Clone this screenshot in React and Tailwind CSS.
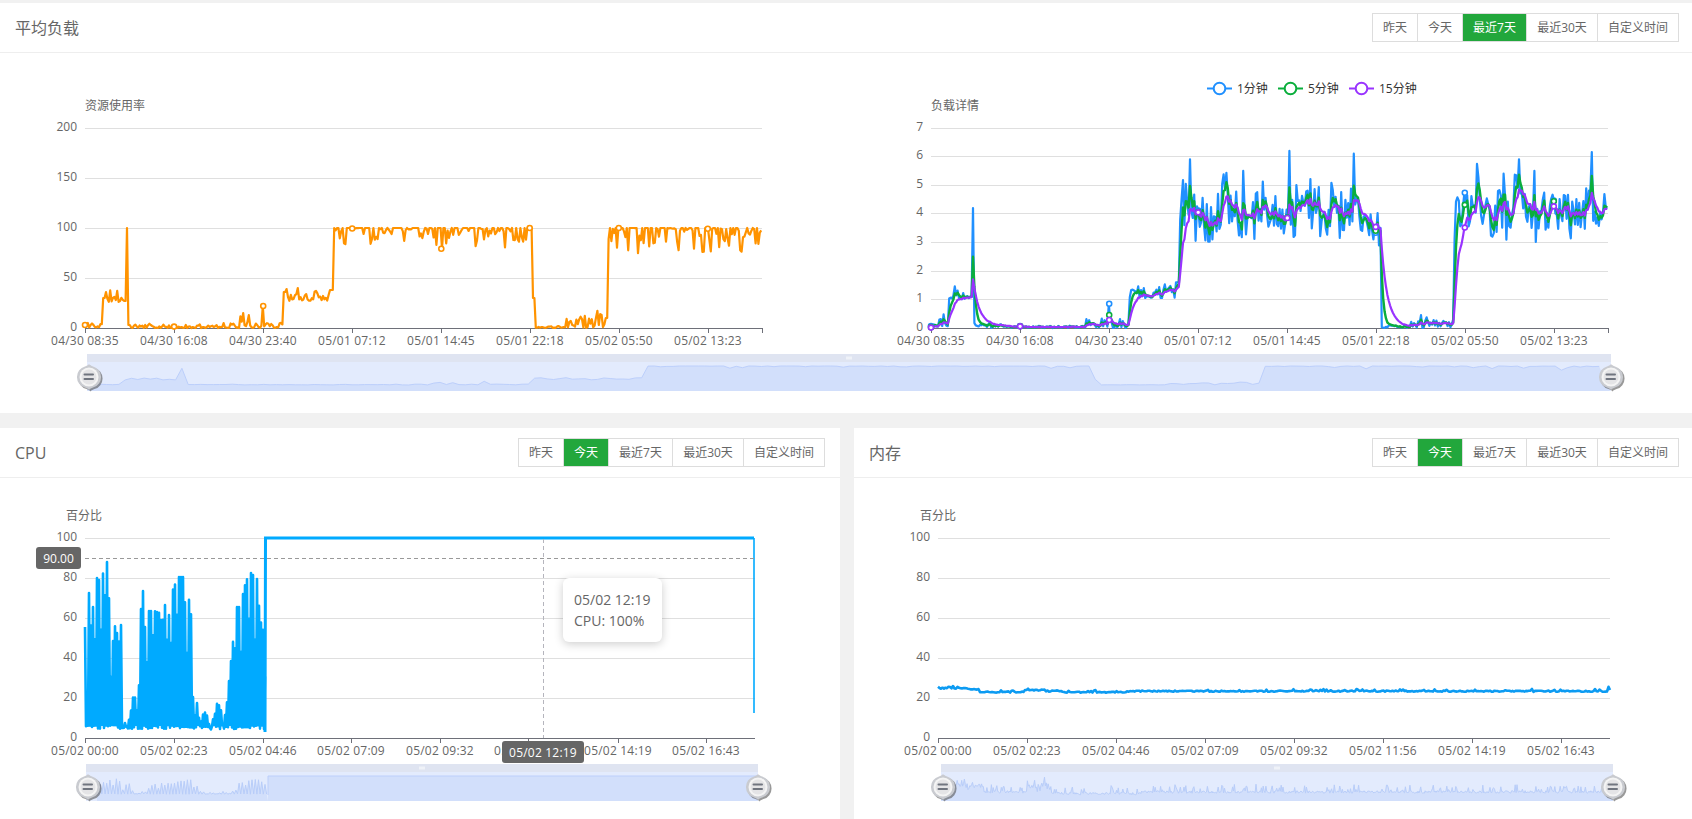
const FONT = "font-['Open_Sans','Noto_Sans_CJK_SC',sans-serif]";

const makeRand = (seed) => () => {
  seed = (seed + 0x6d2b79f5) | 0;
  let t = Math.imul(seed ^ (seed >>> 15), 1 | seed);
  t = (t + Math.imul(t ^ (t >>> 7), 61 | t)) ^ t;
  return ((t ^ (t >>> 14)) >>> 0) / 4294967296;
};

// plot widths are 677px on the load charts, one point every 1.4px
const LOAD_W = 677;
const LOAD_STEP = 1.4;

function usageAt(px, r) {
  if (px < 18) return r() * r() * 11;
  if (px < 20) return 30;
  if (px < 38) return 26 + r() * r() * 16;
  if (px < 41) return 27;
  if (px < 43) return 100;
  if (px < 46) return 3;
  if (px < 155) return r() * r() * 8 * (px > 70 && px < 120 ? 0.5 : 1);
  if (px < 198) return r() * r() * 14;
  if (px < 201) return 36;
  if (px < 244) return 27 + r() * r() * 17;
  if (px < 248) return 38;
  if (px < 442) {
    if (r() < 0.36) return 100;
    return 100 - r() * r() * (px > 432 ? 36 : 27);
  }
  if (px < 447) return 100;
  if (px < 450) return 30;
  if (px < 480) return r() * 2;
  if (px < 520) return r() * r() * 20;
  if (px < 523) return 10;
  if (r() < 0.36) return 100;
  return 100 - r() * r() * 30;
}

function loadAt(px, r) {
  const wave = 0.32 * Math.sin(px / 6.5) + 0.18 * Math.sin(px / 2.9 + 1);
  if (px > 70 && px < 155) return r() * 0.08;
  if (px < 18) return 0.05 + r() * r() * 0.55;
  if (px >= 18 && px < 38) return 1 + r() * r() * 0.7;
  if (px >= 38 && px < 41) return 1.1;
  if (px >= 41 && px < 43) return 4.2;
  if (px >= 43 && px < 198) return r() * r() * 0.42;
  if (px >= 198 && px < 244) return 1.05 + r() * r() * 0.75;
  if (px >= 244 && px < 248) return 1.6;
  if (px >= 248 && px < 450) return 3.1 + wave + r() * 1.85 + (r() < 0.08 ? r() * 1.1 : 0);
  if (px >= 450 && px < 480) return r() * 0.1;
  if (px >= 480 && px < 522) return r() * r() * 0.7;
  if (px >= 523) return 3.1 + wave + r() * 1.85 + (r() < 0.07 ? r() * 1 : 0);
  return 0.3;
}

function buildLoad() {
  const r1 = makeRand(11);
  const r2 = makeRand(29);
  const usage = [];
  const blue = [];
  for (let px = 0; px <= LOAD_W; px += LOAD_STEP) {
    usage.push([px, usageAt(px, r1)]);
    blue.push([px, loadAt(px, r2)]);
  }
  const spike = (arr, px, v) => {
    arr[Math.round(px / LOAD_STEP)][1] = v;
  };
  spike(usage, 178, 22);
  spike(usage, 158, 15);
  spike(usage, 42, 100);
  spike(blue, 178, 0.85);
  spike(blue, 259, 5.9);
  spike(blue, 358, 6.2);
  spike(blue, 423, 6.1);
  spike(blue, 312, 5.5);
  spike(blue, 572, 5.4);
  spike(blue, 588, 5.9);
  spike(blue, 604, 5.5);
  const ema = (a) => {
    let cur = 0;
    return blue.map(([x, v]) => {
      cur += (v - cur) * a;
      return [x, cur];
    });
  };
  return { usage, blue, green: ema(0.45), purple: ema(0.2) };
}

const { usage, blue, green, purple } = buildLoad();

const toPoints = (arr, x0, y0, scale) =>
  arr.map(([x, v]) => `${(x0 + x).toFixed(1)},${(y0 - v * scale).toFixed(1)}`).join(" ");

const CPU_ENV = [
  [0, 55], [2, 20], [4, 72], [8, 65], [11, 80], [15, 78], [19, 83], [23, 89], [26, 30], [29, 57],
  [32, 52], [35, 80], [38, 8], [42, 6], [45, 10], [49, 23], [53, 10], [57, 82], [60, 55], [64, 63],
  [69, 63], [75, 62], [77, 55], [80, 66], [83, 60], [85, 70], [89, 75], [93, 80], [99, 80], [102, 42],
  [105, 82], [108, 20], [112, 17], [115, 6], [119, 13], [123, 10], [126, 6], [131, 13], [134, 24], [137, 8],
  [141, 12], [144, 28], [146, 38], [150, 65], [155, 65], [161, 78], [166, 82], [172, 79], [175, 59], [180, 50],
];

function envAt(px) {
  for (let i = 1; i < CPU_ENV.length; i++) {
    if (px <= CPU_ENV[i][0]) {
      const [x0, v0] = CPU_ENV[i - 1];
      const [x1, v1] = CPU_ENV[i];
      return v0 + ((v1 - v0) * (px - x0)) / (x1 - x0);
    }
  }
  return 50;
}

function cpuZigzag(x0, y0, scale, step, xScale = 1) {
  const r = makeRand(5);
  const pts = [];
  let up = true;
  for (let px = 0; px <= 180; px += step) {
    const top = envAt(px) * (r() < 0.7 ? 1 : 0.55 + r() * 0.4);
    const v = up ? top : 4 + r() * 2.2;
    pts.push(`${(x0 + px * xScale).toFixed(1)},${(y0 - v * scale).toFixed(1)}`);
    up = !up;
  }
  return pts.join(" ");
}

function memorySeries() {
  const r = makeRand(77);
  const pts = [];
  for (let px = 0; px <= 672; px += 1.5) {
    let v = 23.4;
    if (px < 42) v = 24.9 - (px > 25 ? (px - 25) * 0.04 : 0);
    else if (px < 86) v = 23;
    else if (px < 107) v = 24;
    else if (px < 124) v = 23.5;
    else if (px < 188) v = 22.9;
    v += (r() - 0.5) * 0.6 + (r() < 0.08 ? 0.8 : 0);
    pts.push([px, v]);
  }
  pts[pts.length - 1][1] = 24;
  pts[pts.length - 2][1] = 25.6;
  return pts;
}

function memoryMini() {
  const r = makeRand(41);
  const pts = [];
  for (let px = 0; px <= 672; px += 0.9) {
    let y = 792;
    if (px < 14) y = 786;
    else if (px < 42) y = 784 + r() * 5;
    else if (px < 86) y = 792;
    else if (px < 110) y = 784 + r() * 7;
    else if (px < 200) y = 793.5;
    y += (r() - 0.5) * 2.5;
    if (px > 14 && r() < 0.22) y -= 2 + r() * 5;
    pts.push(`${(941 + px).toFixed(1)},${y.toFixed(1)}`);
  }
  return pts.join(" ");
}

function miniUsage() {
  const pts = [];
  for (let i = 0; i + 2 < usage.length; i += 2) {
    const a = usage[i][1];
    const b = usage[i + 1][1];
    const v = Math.max(a, b) * 0.75 + ((a + b) / 2) * 0.25;
    pts.push(`${(87.4 + (usage[i][0] / LOAD_W) * 1523).toFixed(1)},${(385 - v * 0.19).toFixed(1)}`);
  }
  return pts.join(" ");
}

function Grid({ x0, x1, ys, labels, ticks, tickLabels, axisY, lastTick }) {
  return (
    <g fontSize="12" fill="#666">
      {ys.map((y, i) => (
        <g key={y}>
          {i < ys.length - 1 && <line x1={x0} x2={x1} y1={y + 0.5} y2={y + 0.5} stroke="#dfdfdf" />}
          <text x={x0 - 8} y={y + 3} textAnchor="end">{labels[i]}</text>
        </g>
      ))}
      <line x1={x0} x2={x1} y1={axisY + 0.5} y2={axisY + 0.5} stroke="#6e7079" />
      {ticks.map((t, i) => (
        <g key={t}>
          <line x1={t + 0.5} x2={t + 0.5} y1={axisY} y2={axisY + 5} stroke="#6e7079" />
          {tickLabels[i] && <text x={t} y={axisY + 17} textAnchor="middle" letterSpacing="0.2">{tickLabels[i]}</text>}
        </g>
      ))}
      {lastTick && <line x1={lastTick + 0.5} x2={lastTick + 0.5} y1={axisY} y2={axisY + 5} stroke="#6e7079" />}
    </g>
  );
}

function Handle({ x, y }) {
  const shape = "M0 -13 C1 -11.6 2.5 -11.2 4 -10.6 A11 11 0 0 1 4 10.6 C2.5 11.2 1 11.6 0 13 C-1 11.6 -2.5 11.2 -4 10.6 A11 11 0 0 1 -4 -10.6 C-2.5 -11.2 -1 -11.6 0 -13 Z";
  return (
    <g transform={`translate(${x} ${y})`}>
      <path d={shape} transform="translate(1.5 1.5)" fill="#555" opacity="0.6" />
      <path d={shape} fill="#c9cbd0" />
      <circle r="9.5" fill="#f4f4f4" />
      <circle r="7.5" fill="#e4e4e6" />
      <rect x="-5.5" y="-3.5" width="10.5" height="2" rx="1" fill="#70757f" />
      <rect x="-5.5" y="1" width="10.5" height="2" rx="1" fill="#70757f" />
    </g>
  );
}

function ZoomBar({ x0, x1, top, children }) {
  const mid = (x0 + x1) / 2;
  return (
    <g>
      <rect x={x0} y={top} width={x1 - x0} height={8} fill="#dfe4f1" />
      <rect x={x0} y={top + 8} width={x1 - x0} height={29} fill="#e3ebfd" />
      {children}
      <g fill="#fff">
        <rect x={mid - 2.5} y={top + 2.5} width="1" height="3" />
        <rect x={mid - 0.5} y={top + 2.5} width="1" height="3" />
        <rect x={mid + 1.5} y={top + 2.5} width="1" height="3" />
      </g>
      <Handle x={x0 + 2} y={top + 23} />
      <Handle x={x1} y={top + 23} />
    </g>
  );
}

function Dots({ x0, y0, scale, series, stroke, r = 2.5 }) {
  const ticks = [0, 89.1, 178.2, 267.2, 356.3, 444.7, 533.8, 622.8];
  return ticks.map((t) => (
    <circle
      key={t}
      cx={x0 + t}
      cy={y0 - series[Math.round(t / LOAD_STEP)][1] * scale}
      r={r}
      fill="#fff"
      stroke={stroke}
      strokeWidth="1.6"
    />
  ));
}

function LegendItem({ x, color, label }) {
  return (
    <g>
      <line x1={x} x2={x + 25} y1={88.5} y2={88.5} stroke={color} strokeWidth="2" />
      <circle cx={x + 12.5} cy={88.5} r="5.8" fill="#fff" stroke={color} strokeWidth="2" />
      <text x={x + 30} y={93} fontSize="12" fill="#333">{label}</text>
    </g>
  );
}

function LoadCharts() {
  const tickOffsets = [0, 89.1, 178.2, 267.2, 356.3, 444.7, 533.8, 622.8];
  const tickLabels = ["04/30 08:35", "04/30 16:08", "04/30 23:40", "05/01 07:12", "05/01 14:45", "05/01 22:18", "05/02 05:50", "05/02 13:23"];
  const axisY = 328;
  const leftYs = [128, 178, 228, 278, 328];
  const rightYs = [128, 156, 185, 213, 242, 271, 299, 328];
  const miniLine = miniUsage();
  return (
    <svg width="1692" height="360" viewBox="0 53 1692 360" className="block">
      <text x="85" y="110" fontSize="12" fill="#666">资源使用率</text>
      <Grid
        x0={85}
        x1={762}
        ys={leftYs}
        labels={["200", "150", "100", "50", "0"]}
        ticks={tickOffsets.map((t) => Math.round(85 + t))}
        tickLabels={tickLabels}
        axisY={axisY}
        lastTick={762}
      />
      <polyline points={toPoints(usage, 85, axisY, 1)} fill="none" stroke="#ff9300" strokeWidth="2.2" strokeLinejoin="round" />
      <Dots x0={85} y0={axisY} scale={1} series={usage} stroke="#ff9300" />

      <LegendItem x={1207} color="#2090ff" label="1分钟" />
      <LegendItem x={1278} color="#0aae3c" label="5分钟" />
      <LegendItem x={1349} color="#9933ff" label="15分钟" />
      <text x="931" y="110" fontSize="12" fill="#666">负载详情</text>
      <Grid
        x0={931}
        x1={1608}
        ys={rightYs}
        labels={["7", "6", "5", "4", "3", "2", "1", "0"]}
        ticks={tickOffsets.map((t) => Math.round(931 + t))}
        tickLabels={tickLabels}
        axisY={axisY}
        lastTick={1608}
      />
      <polyline points={toPoints(blue, 931, axisY, 28.57)} fill="none" stroke="#2090ff" strokeWidth="2.2" strokeLinejoin="round" />
      <polyline points={toPoints(green, 931, axisY, 28.57)} fill="none" stroke="#0aae3c" strokeWidth="2.4" strokeLinejoin="round" />
      <polyline points={toPoints(purple, 931, axisY, 28.57)} fill="none" stroke="#9933ff" strokeWidth="2.2" strokeLinejoin="round" />
      <Dots x0={931} y0={axisY} scale={28.57} series={blue} stroke="#2090ff" />
      <Dots x0={931} y0={axisY} scale={28.57} series={green} stroke="#0aae3c" />
      <Dots x0={931} y0={axisY} scale={28.57} series={purple} stroke="#9933ff" />

      <ZoomBar x0={87} x1={1611} top={354}>
        <polygon points={`87.4,391 ${miniLine} 1610,391`} fill="#d2dffb" stroke="none" />
        <polyline points={miniLine} fill="none" stroke="#bccffb" strokeWidth="1" />
      </ZoomBar>
    </svg>
  );
}

const PERCENT_YS = [538, 578, 618, 658, 698, 738];
const PERCENT_LABELS = ["100", "80", "60", "40", "20", "0"];

function CpuChart() {
  const ticks = [85, 174, 263, 351, 440, 528, 618, 706];
  const labels = ["05/02 00:00", "05/02 02:23", "05/02 04:46", "05/02 07:09", "05/02 09:32", "05/02 11:56", "05/02 14:19", "05/02 16:43"];
  const axisY = 738;
  const miniSpikes = cpuZigzag(97, 795, 0.19, 1.7, 0.95);
  return (
    <svg width="840" height="341" viewBox="0 478 840 341" className="block">
      <text x="66" y="520" fontSize="12" fill="#666">百分比</text>
      <Grid x0={85} x1={755} ys={PERCENT_YS} labels={PERCENT_LABELS} ticks={ticks} tickLabels={labels} axisY={axisY} />
      <polyline points={cpuZigzag(85, axisY - 1, 2, 1)} fill="none" stroke="#00aaff" strokeWidth="2.6" strokeLinejoin="round" />
      <polyline points="265,732 265.5,538 754,538" fill="none" stroke="#00aaff" strokeWidth="3" />
      <line x1="754" x2="754" y1="538" y2="713" stroke="#00aaff" strokeWidth="1.6" />

      <line x1="85" x2="754" y1="558.5" y2="558.5" stroke="#999" strokeDasharray="4 3" />
      <rect x="36" y="547" width="45" height="22" rx="3" fill="#666" />
      <text x="58.5" y="562.5" fontSize="12" fill="#fff" textAnchor="middle">90.00</text>

      <line x1="543.5" x2="543.5" y1="539" y2="738" stroke="#b5b5bd" strokeDasharray="4 3" />
      <rect x="502" y="741" width="82" height="22" rx="3" fill="#666" />
      <text x="543" y="756.5" fontSize="12" fill="#fff" textAnchor="middle" letterSpacing="0.2">05/02 12:19</text>

      <ZoomBar x0={86} x1={758} top={764}>
        <polygon points="268,801 268,776 758,776 758,801" fill="#d2dffb" />
        <polygon points={`97,801 ${miniSpikes} 268,801`} fill="#d2dffb" />
        <polyline points={miniSpikes} fill="none" stroke="#b8cdf9" strokeWidth="1" />
        <polyline points="268,795 268,776 758,776" fill="none" stroke="#bccffb" strokeWidth="1" />
      </ZoomBar>
    </svg>
  );
}

function MemoryChart() {
  const ticks = [938, 1027, 1116, 1205, 1294, 1383, 1472, 1561];
  const labels = ["05/02 00:00", "05/02 02:23", "05/02 04:46", "05/02 07:09", "05/02 09:32", "05/02 11:56", "05/02 14:19", "05/02 16:43"];
  const axisY = 738;
  const mini = memoryMini();
  return (
    <svg width="838" height="341" viewBox="854 478 838 341" className="block">
      <text x="920" y="520" fontSize="12" fill="#666">百分比</text>
      <Grid x0={938} x1={1610} ys={PERCENT_YS} labels={PERCENT_LABELS} ticks={ticks} tickLabels={labels} axisY={axisY} />
      <polyline points={toPoints(memorySeries(), 938, axisY, 2)} fill="none" stroke="#0c9bf2" strokeWidth="2.6" strokeLinejoin="round" />
      <ZoomBar x0={941} x1={1613} top={764}>
        <polygon points={`941,801 ${mini} 1613,801`} fill="#d2dffb" />
        <polyline points={mini} fill="none" stroke="#b8cdf9" strokeWidth="1" />
      </ZoomBar>
    </svg>
  );
}

function RangeButtons({ active }) {
  const items = [
    { label: "昨天", width: "w-[46px]" },
    { label: "今天", width: "w-[46px]" },
    { label: "最近7天", width: "w-[65px]" },
    { label: "最近30天", width: "w-[72px]" },
    { label: "自定义时间", width: "w-[82px]" },
  ];
  return (
    <div className="flex h-[29px] pl-px text-xs">
      {items.map((item) => (
        <button
          key={item.label}
          className={`-ml-px flex items-center justify-center border border-[#ddd] ${item.width} ${
            item.label === active ? "bg-[#22a73c] text-white" : "bg-white text-[#666]"
          }`}
        >
          {item.label}
        </button>
      ))}
    </div>
  );
}

function PanelHeader({ title, active, padRight }) {
  return (
    <div className={`flex h-[50px] items-center justify-between border-b border-[#eeeeee] pl-[15px] ${padRight}`}>
      <h2 className="text-base font-normal text-[#666]">{title}</h2>
      <RangeButtons active={active} />
    </div>
  );
}

export default function App() {
  return (
    <div className={`flex h-[819px] w-[1692px] flex-col gap-[15px] overflow-hidden bg-[#f1f1f1] pt-[3px] ${FONT}`}>
      <section className="h-[410px] bg-white">
        <PanelHeader title="平均负载" active="最近7天" padRight="pr-[13px]" />
        <LoadCharts />
      </section>
      <div className="flex flex-1 gap-[14px]">
        <section className="relative w-[840px] bg-white">
          <PanelHeader title="CPU" active="今天" padRight="pr-[15px]" />
          <CpuChart />
          <div className="absolute left-[563px] top-[150px] h-16 w-[99px] rounded-md bg-white py-[11px] pl-[11px] text-sm leading-[21px] text-[#666] shadow-[0_2px_10px_rgba(0,0,0,0.2)]">
            <div>05/02 12:19</div>
            <div>CPU: 100%</div>
          </div>
        </section>
        <section className="flex-1 bg-white">
          <PanelHeader title="内存" active="今天" padRight="pr-[13px]" />
          <MemoryChart />
        </section>
      </div>
    </div>
  );
}
